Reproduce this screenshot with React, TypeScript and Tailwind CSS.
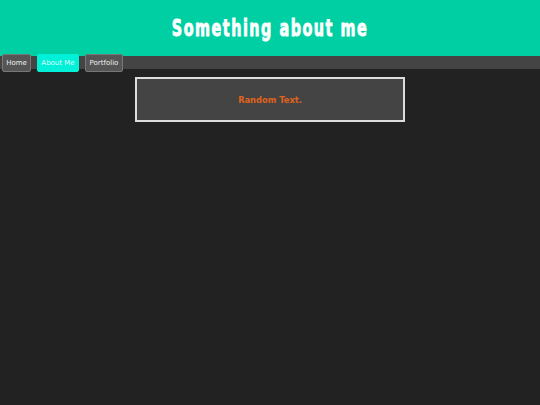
export default function App() {
  const btn =
    "h-[18px] pt-[2px] flex items-center justify-center whitespace-nowrap rounded-[2px] border text-[7px] leading-none";
  return (
    <div className="w-[540px] h-[405px] bg-[#222222] overflow-hidden" style={{ fontFamily: '"DejaVu Sans", sans-serif' }}>
      <header className="h-[56px] bg-[#00cfa3] flex items-center justify-center">
        <h1
          className="text-white text-[16px] font-bold tracking-[1.5px] leading-none mt-[1px] [-webkit-text-stroke:0.6px_white]"
          style={{ fontFamily: '"DejaVu Sans Condensed", "DejaVu Sans", sans-serif', transform: "scaleY(1.45)" }}
        >
          Something about me
        </h1>
      </header>
      <nav className="h-[13px] bg-[#444444] flex items-center gap-[6px] pl-[2px]">
        <button className={btn + " w-[29px] bg-[#555555] border-[#777777] text-[#eeeeee]"}>Home</button>
        <button className={btn + " w-[42px] bg-[#00f0d8] border-[#00f0d8] text-[#dfffff]"}>About Me</button>
        <button className={btn + " w-[38px] bg-[#555555] border-[#777777] text-[#eeeeee]"}>Portfolio</button>
      </nav>
      <main className="pt-[8px]">
        <div className="ml-[135px] w-[270px] h-[45px] border-2 border-[#dddddd] bg-[#444444] flex items-center justify-center">
          <p className="text-[#e0631c] text-[8.3px] font-bold pt-[2px]">Random Text.</p>
        </div>
      </main>
    </div>
  );
}
